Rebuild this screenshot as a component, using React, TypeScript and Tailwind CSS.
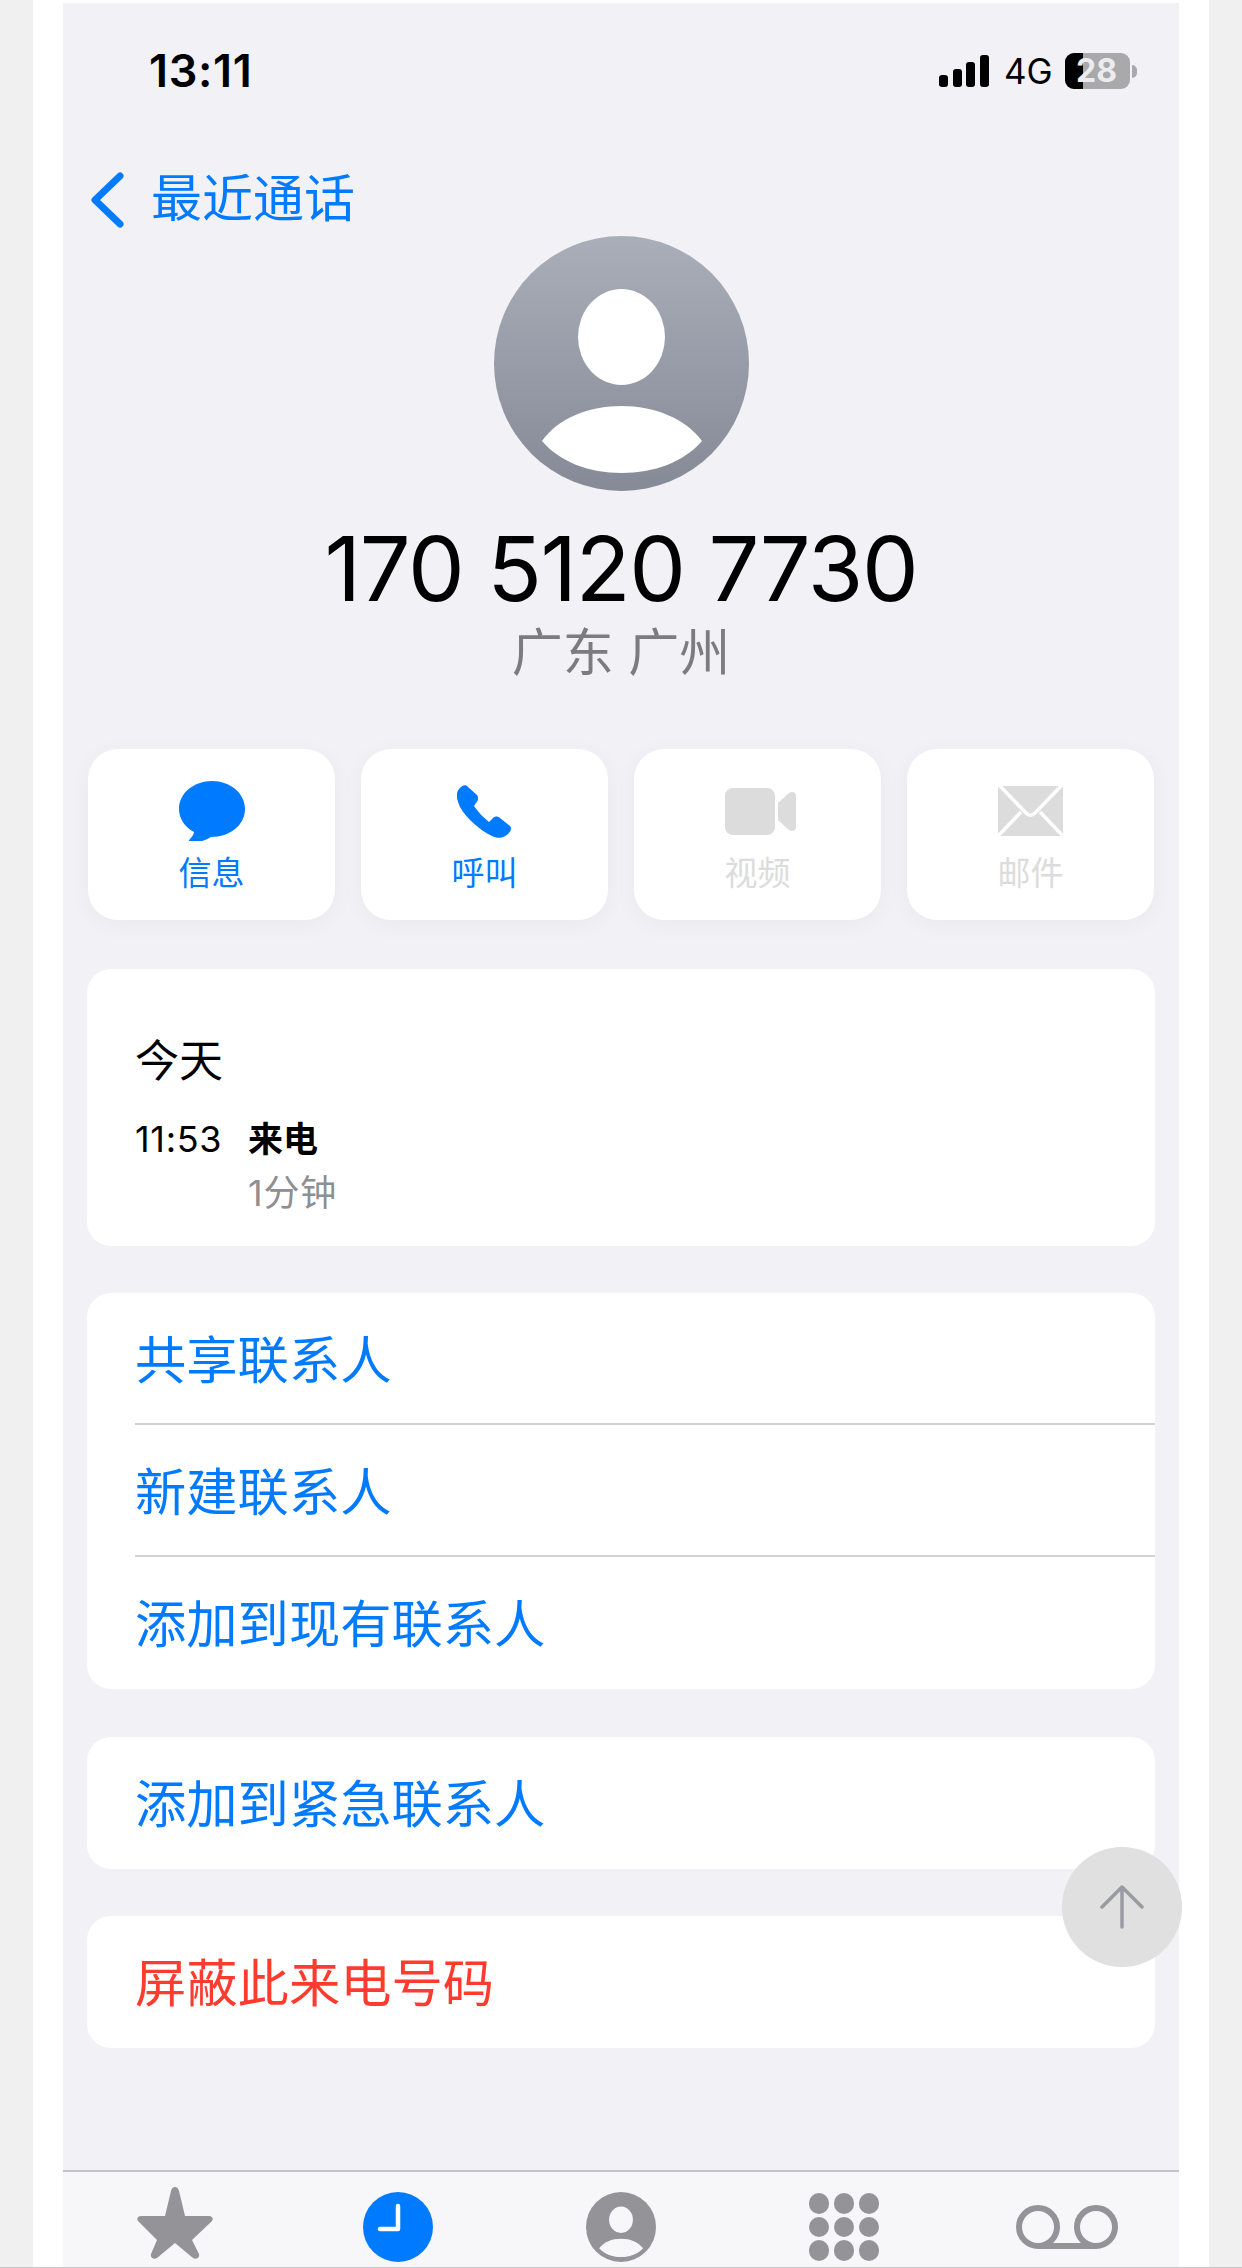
import type { ReactNode } from "react";

const sans = "font-['Inter','Noto_Sans_CJK_SC',sans-serif]";

const ActionButton = ({ label, muted, children }: { label: string; muted?: boolean; children: ReactNode }) => (
  <div className="w-[247px] h-[171px] bg-white rounded-[30px] shadow-[0_4px_24px_rgba(0,0,0,0.04)] flex flex-col items-center">
    <div className="h-[102px] w-full flex items-center justify-center pt-[22px]">{children}</div>
    <p className={`text-[33px] leading-[40px] mt-[2px] ${muted ? "text-[#dcdcdc]" : "text-[#007aff]"}`}>{label}</p>
  </div>
);

const ListRow = ({ label, red, divider }: { label: string; red?: boolean; divider?: boolean }) => (
  <div className={`relative h-[132px] pl-[48px] pt-[3px] flex items-center text-[51.3px] ${red ? "text-[#ff3b30]" : "text-[#007aff]"}`}>
    {label}
    {divider && <div className="absolute left-[48px] right-0 bottom-0 h-[2px] bg-[#d1d1d6]"></div>}
  </div>
);

const PersonIcon = ({ size, fill, cut }: { size: number; fill: string; cut: string }) => (
  <svg width={size} height={size} viewBox="0 0 255 255">
    <defs>
      <linearGradient id="avatarGrad" x1="0" y1="0" x2="0" y2="1">
        <stop offset="0" stopColor="#a9aeb9" />
        <stop offset="1" stopColor="#858a96" />
      </linearGradient>
    </defs>
    <circle cx="127.5" cy="127.5" r="127.5" fill={fill} />
    <ellipse cx="127.5" cy="101" rx="43.5" ry="48" fill={cut} />
    <path d="M48 205C64 182 95 170 127.5 170C160 170 191 182 208 205C190 226 160 237 127.5 237C95 237 66 226 48 205Z" fill={cut} />
  </svg>
);

export default function App() {
  return (
    <div className={`w-[1242px] h-[2268px] bg-[#f0f0f0] px-[33px] overflow-hidden border-b border-[#c8c8cc] ${sans}`}>
      <div className="h-full bg-white px-[30px] pt-[3px]">
        <div className="relative h-[2264px] bg-[#f1f1f6] flex flex-col">
          {/* status bar */}
          <div className="h-[136px] flex items-center justify-between pl-[86px] pr-[42px] shrink-0">
            <span className="text-[45px] tracking-[0.7px] font-semibold text-black">13:11</span>
            <div className="flex items-center">
              <svg width="50" height="32" viewBox="0 0 50 32" className="mr-[15px]">
                <rect x="0" y="20" width="9" height="12" rx="3" fill="#000" />
                <rect x="14" y="14" width="9" height="18" rx="3" fill="#000" />
                <rect x="27" y="7" width="9" height="25" rx="3" fill="#000" />
                <rect x="41" y="0" width="9" height="32" rx="3" fill="#000" />
              </svg>
              <span className="text-[35px] leading-none text-black w-[61px]">4G</span>
              <div className="relative w-[65px] h-[36px] rounded-[9px] bg-[#a9a9ac]">
                <div className="w-[18px] h-full rounded-l-[9px] bg-black"></div>
                <span className="absolute left-[11px] top-[2px] text-[32px] font-bold text-[#ececee] leading-[32px]">28</span>
              </div>
              <div className="w-[5px] h-[13px] ml-[2px] rounded-r-full bg-[#a9a9ac]"></div>
            </div>
          </div>

          {/* back */}
          <div className="h-[97px] pl-[28px] flex items-start text-[#007aff] shrink-0">
            <svg width="34" height="56" viewBox="0 0 34 56" className="mt-[33px]" fill="none" stroke="#007aff" strokeWidth="7" strokeLinecap="round" strokeLinejoin="round">
              <path d="M29 4L4 28L29 52" />
            </svg>
            <span className="text-[51px] leading-[56px] ml-[26px] mt-[32px]">最近通话</span>
          </div>

          {/* caller */}
          <div className="flex flex-col items-center shrink-0">
            <PersonIcon size={255} fill="url(#avatarGrad)" cut="#ffffff" />
            <p className="mt-[30px] h-[96px] text-[90px] tracking-[-1.4px] leading-[96px] text-black">170 5120 7730</p>
            <p className="mt-[6px] h-[60px] text-[51px] leading-[60px] text-[#7c7c80]">广东 广州</p>
          </div>

          {/* actions */}
          <div className="mt-[66px] px-[25px] flex justify-between shrink-0">
            <ActionButton label="信息">
              <svg width="66" height="60" viewBox="0 0 66 60">
                <path d="M33 0C51 0 66 12 66 28C66 44 51 56 32 56C26 60 14 63 10 63C7 63 9 61 11 58C13 56 15 53 15 51C6 46 0 38 0 28C0 12 15 0 33 0Z" fill="#007aff" />
              </svg>
            </ActionButton>
            <ActionButton label="呼叫">
              <svg width="55" height="53" viewBox="0 0 55 53">
                <path d="M2 4C5 0 9 -1 11 2L20 10C22 13 21 16 19 18L17 21C21 27 26 32 32 37L36 33C38 31 41 31 43 33L53 41C55 43 54 46 51 49C47 53 41 54 35 51C24 46 9 33 3 22C0 15 -2 9 2 4Z" fill="#007aff" />
              </svg>
            </ActionButton>
            <ActionButton label="视频" muted>
              <svg width="71" height="47" viewBox="0 0 71 47" className="ml-[6px]">
                <rect x="0" y="0" width="50" height="47" rx="8" fill="#dcdcdc" />
                <path d="M53 15L64 5C67 3 71 4 71 8V39C71 43 67 44 64 42L53 32Z" fill="#dcdcdc" />
              </svg>
            </ActionButton>
            <ActionButton label="邮件" muted>
              <svg width="65" height="50" viewBox="0 0 65 50">
                <rect x="0" y="0" width="65" height="50" rx="2" fill="#dcdcdc" />
                <path d="M1 -1L28 27C31 30 34 30 37 27L64 -1M0 50L23 26M65 50L42 26" fill="none" stroke="#ffffff" strokeWidth="3.5" />
              </svg>
            </ActionButton>
          </div>

          {/* history */}
          <div className="mt-[49px] mx-[24px] h-[277px] bg-white rounded-[24px] pl-[48px] pt-[67px] shrink-0 text-black">
            <p className="text-[44px] leading-[50px]">今天</p>
            <div className="flex mt-[30px]">
              <span className="w-[113px] text-[36px] tracking-[0.7px] leading-[46px]">11:53</span>
              <div>
                <p className="text-[35px] leading-[46px] font-bold">来电</p>
                <p className="mt-[8px] text-[36px] tracking-[0.8px] leading-[46px] text-[#8e8e93]">1分钟</p>
              </div>
            </div>
          </div>

          {/* contact options */}
          <div className="mt-[47px] mx-[24px] bg-white rounded-[24px] overflow-hidden shrink-0">
            <ListRow label="共享联系人" divider />
            <ListRow label="新建联系人" divider />
            <ListRow label="添加到现有联系人" />
          </div>
          <div className="mt-[48px] mx-[24px] bg-white rounded-[24px] overflow-hidden shrink-0">
            <ListRow label="添加到紧急联系人" />
          </div>
          <div className="mt-[47px] mx-[24px] bg-white rounded-[24px] overflow-hidden shrink-0">
            <ListRow label="屏蔽此来电号码" red />
          </div>

          {/* tab bar */}
          <div className="mt-auto h-[97px] bg-[#f7f7f9] border-t-2 border-[#c4c4c8] grid grid-cols-5 shrink-0">
            <div className="flex justify-center pt-[15px]">
              <svg width="76" height="72" viewBox="0 0 76 72">
                <path d="M38 0C40 0 41 1 42 4L48 29H72C76 29 77 33 74 35L55 53L62 67C63 71 59 73 56 71L38 56L20 71C17 73 13 71 14 67L20 53L2 35C-1 33 0 29 4 29H28L34 4C35 1 36 0 38 0Z" fill="#949498" />
              </svg>
            </div>
            <div className="flex justify-center pt-[20px]">
              <svg width="70" height="70" viewBox="0 0 70 70">
                <circle cx="35" cy="35" r="35" fill="#007aff" />
                <path d="M35 14V37H17" fill="none" stroke="#ffffff" strokeWidth="4.5" strokeLinecap="round" strokeLinejoin="round" />
              </svg>
            </div>
            <div className="flex justify-center pt-[20px]">
              <PersonIcon size={70} fill="#949498" cut="#f7f7f9" />
            </div>
            <div className="flex justify-center pt-[21px]">
              <div className="grid grid-cols-3 gap-x-[5px] gap-y-[3px] w-[70px] h-[68px]">
                {Array.from({ length: 9 }).map((_, i) => (
                  <div key={i} className="w-[20px] h-[20.5px] rounded-full bg-[#949498]"></div>
                ))}
              </div>
            </div>
            <div className="flex justify-center pt-[33px]">
              <svg width="102" height="44" viewBox="0 0 102 44" fill="none" stroke="#949498" strokeWidth="6">
                <circle cx="22" cy="22" r="19" />
                <circle cx="80" cy="22" r="19" />
                <path d="M22 41H80" />
              </svg>
            </div>
          </div>

          {/* scroll to top */}
          <div className="absolute left-[999px] top-[1844px] w-[120px] h-[120px] rounded-full bg-[#e0e0e0] flex items-center justify-center">
            <svg width="44" height="44" viewBox="0 0 44 44" fill="none" stroke="#9a9ba2" strokeWidth="3.5" strokeLinecap="round" strokeLinejoin="round">
              <path d="M22 42V2M2 22L22 2L42 22" />
            </svg>
          </div>
        </div>
      </div>
    </div>
  );
}
